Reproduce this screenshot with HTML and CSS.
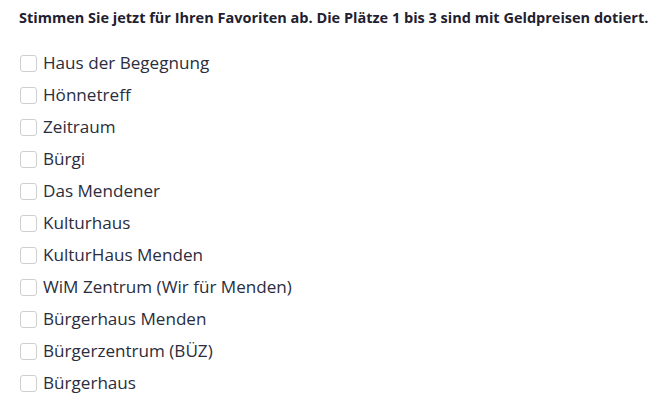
FILE: index.html
```html
<!DOCTYPE html>
<html lang="de">
<head>
<meta charset="utf-8">
<title>Abstimmung</title>
<link rel="stylesheet" href="styles.css">
</head>
<body>
<div class="poll">
  <p class="title">Stimmen Sie jetzt für Ihren Favoriten ab. Die Plätze 1 bis 3 sind mit Geldpreisen dotiert.</p>
  <ul class="options">
    <li class="option"><span class="box"></span><span class="label">Haus der Begegnung</span></li>
    <li class="option"><span class="box"></span><span class="label">Hönnetreff</span></li>
    <li class="option"><span class="box"></span><span class="label">Zeitraum</span></li>
    <li class="option"><span class="box"></span><span class="label">Bürgi</span></li>
    <li class="option"><span class="box"></span><span class="label">Das Mendener</span></li>
    <li class="option"><span class="box"></span><span class="label">Kulturhaus</span></li>
    <li class="option"><span class="box"></span><span class="label">KulturHaus Menden</span></li>
    <li class="option"><span class="box"></span><span class="label">WiM Zentrum (Wir für Menden)</span></li>
    <li class="option"><span class="box"></span><span class="label">Bürgerhaus Menden</span></li>
    <li class="option"><span class="box"></span><span class="label">Bürgerzentrum (BÜZ)</span></li>
    <li class="option"><span class="box"></span><span class="label">Bürgerhaus</span></li>
  </ul>
</div>
</body>
</html>
```
FILE: styles.css
```css
html, body {
  margin: 0;
  padding: 0;
  background: #ffffff;
}
.poll {
  padding: 8px 0 0 19px;
  font-family: "Open Sans", "Noto Sans", sans-serif;
  color: #2a2d3d;
}
.title {
  margin: 0;
  font-size: 14.5px;
  font-weight: 700;
  line-height: 20px;
  color: #1f2130;
  white-space: nowrap;
}
.options {
  list-style: none;
  margin: 19px 0 0 0;
  padding: 0;
}
.option {
  display: flex;
  align-items: center;
  height: 32px;
}
.box {
  box-sizing: border-box;
  width: 17px;
  height: 17px;
  border: 1.5px solid #cfcfcf;
  border-radius: 3px;
  margin: 0 6px 0 1px;
  flex: none;
}
.label {
  font-size: 17.1px;
  line-height: 22px;
}
```
